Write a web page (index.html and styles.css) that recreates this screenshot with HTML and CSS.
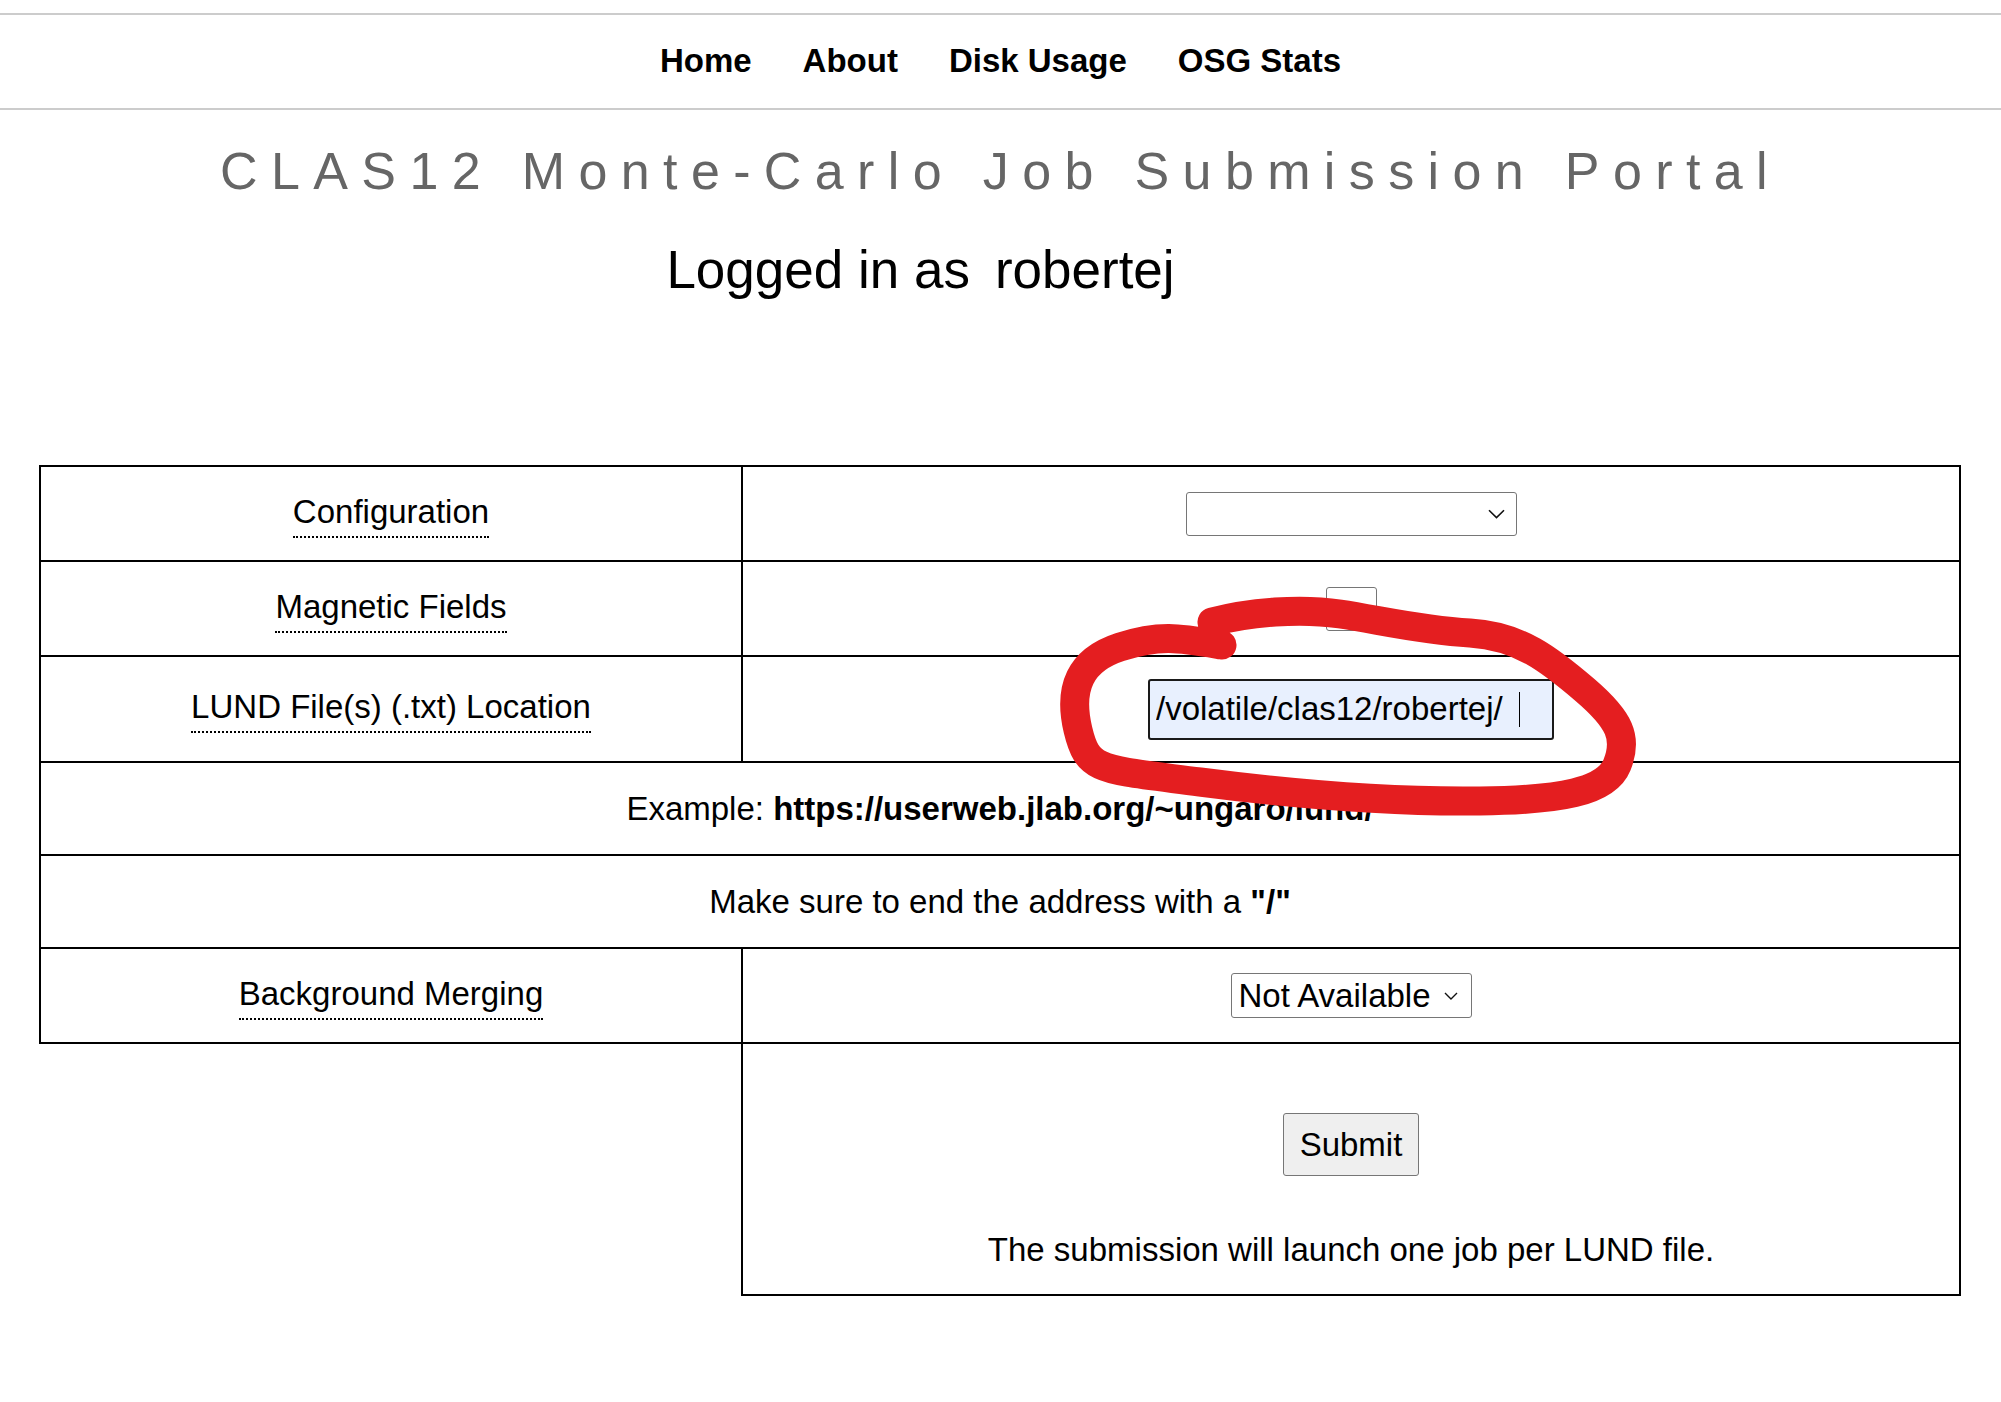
FILE: index.html
```html
<!DOCTYPE html>
<html lang="en">
<head>
<meta charset="utf-8">
<title>CLAS12 Monte-Carlo Job Submission Portal</title>
<link rel="stylesheet" href="styles.css">
</head>
<body>
<header class="topnav">
  <nav class="nav-links">
    <a href="#">Home</a>
    <a href="#">About</a>
    <a href="#">Disk Usage</a>
    <a href="#">OSG Stats</a>
  </nav>
</header>

<h1 class="portal-title">CLAS12 Monte-Carlo Job Submission Portal</h1>
<h2 class="login-line">Logged in as<span class="user">robertej</span></h2>

<form class="job-form">
  <table class="form-table">
    <colgroup>
      <col class="col-label">
      <col class="col-field">
    </colgroup>
    <tr class="row-a">
      <td class="label-cell"><span class="tip">Configuration</span></td>
      <td class="field-cell">
        <span class="select-wrap">
          <select class="sel sel-cfg"><option></option></select>
          <svg class="chev chev-cfg" width="17" height="10" viewBox="0 0 17 10"><path d="M1 1.2 L8.5 8.6 L16 1.2" fill="none" stroke="#111" stroke-width="1.6"/></svg>
        </span>
      </td>
    </tr>
    <tr class="row-a">
      <td class="label-cell"><span class="tip">Magnetic Fields</span></td>
      <td class="field-cell">
        <span class="select-wrap">
          <select class="sel sel-mag"><option></option></select>
          <svg class="chev chev-mag" width="17" height="10" viewBox="0 0 17 10"><path d="M1 1.2 L8.5 8.6 L16 1.2" fill="none" stroke="#111" stroke-width="1.6"/></svg>
        </span>
      </td>
    </tr>
    <tr class="row-b">
      <td class="label-cell"><span class="tip">LUND File(s) (.txt) Location</span></td>
      <td class="field-cell">
        <span class="input-wrap">
          <input class="loc-input" type="text" value="/volatile/clas12/robertej/">
          <span class="caret"></span>
        </span>
      </td>
    </tr>
    <tr class="row-c">
      <td class="note-cell" colspan="2">Example: <b>https://userweb.jlab.org/~ungaro/lund/</b></td>
    </tr>
    <tr class="row-c">
      <td class="note-cell" colspan="2">Make sure to end the address with a <b>"/"</b></td>
    </tr>
    <tr class="row-a">
      <td class="label-cell"><span class="tip">Background Merging</span></td>
      <td class="field-cell">
        <span class="select-wrap">
          <select class="sel sel-bg"><option>Not Available</option></select>
          <svg class="chev chev-bg" width="14" height="8" viewBox="0 0 14 8"><path d="M1 1 L7 7 L13 1" fill="none" stroke="#111" stroke-width="1.4"/></svg>
        </span>
      </td>
    </tr>
    <tr class="row-submit">
      <td class="empty-cell"></td>
      <td class="submit-cell">
        <button type="button" class="submit-btn">Submit</button>
        <p class="submit-note">The submission will launch one job per LUND file.</p>
      </td>
    </tr>
  </table>
</form>

<svg class="annotation" width="2001" height="1402" viewBox="0 0 2001 1402">
  <path d="M1212,622 C1250,612 1300,608 1340,614 S1420,630 1470,633 S1550,660 1585,690 S1628,738 1617,765 S1560,800 1480,801 S1300,795 1200,782 S1088,772 1078,730 S1080,660 1120,647 S1180,638 1222,645" fill="none" stroke="#e41e20" stroke-width="29" stroke-linecap="round" stroke-linejoin="round"/>
</svg>
</body>
</html>
```

FILE: styles.css
```css
html, body {
  margin: 0;
  padding: 0;
  background: #fff;
}

body {
  position: relative;
  font-family: "Liberation Sans", Arial, sans-serif;
  color: #000;
  min-height: 1402px;
}

.topnav {
  margin-top: 13px;
  border-top: 2px solid #cccccc;
  border-bottom: 2px solid #cccccc;
  padding: 27px 0 28px;
}

.nav-links {
  display: flex;
  justify-content: center;
  gap: 51px;
}

.nav-links a {
  font-size: 33px;
  line-height: 38px;
  font-weight: bold;
  color: #000;
  text-decoration: none;
}

.portal-title {
  margin: 31px 0 0;
  text-align: center;
  font-size: 52px;
  line-height: 60px;
  font-weight: normal;
  letter-spacing: 13.37px;
  color: #666666;
}

.login-line {
  margin: 39px 0 0;
  padding-right: 160px;
  text-align: center;
  font-size: 53px;
  line-height: 60px;
  font-weight: normal;
  color: #000;
}

.login-line .user {
  margin-left: 25px;
}

.job-form {
  margin: 165px 0 0;
}

.form-table {
  margin-left: 39px;
  width: 1920px;
  border-collapse: collapse;
  table-layout: fixed;
  font-size: 33px;
  line-height: 38px;
}

.col-label { width: 702px; }
.col-field { width: 1218px; }

.form-table td {
  border: 2px solid #000;
  padding: 0;
  text-align: center;
  vertical-align: middle;
}

.row-a { height: 95px; }
.row-b { height: 106px; }
.row-c { height: 93px; }
.row-submit { height: 252px; }

.tip {
  display: inline-block;
  padding: 3px 0 5px;
  border-bottom: 2px dotted #000;
}

.select-wrap {
  position: relative;
  display: inline-block;
  vertical-align: middle;
}

.sel {
  appearance: none;
  -webkit-appearance: none;
  display: block;
  box-sizing: border-box;
  margin: 0;
  border: 1px solid #767676;
  border-radius: 3px;
  background: #fff;
  color: #000;
  font-family: "Liberation Sans", Arial, sans-serif;
  font-size: 33px;
}

.sel-cfg { width: 331px; height: 44px; }
.sel-mag { width: 51px; height: 44px; }
.sel-bg {
  width: 241px;
  height: 45px;
  padding: 0 0 0 7px;
}

.chev {
  position: absolute;
  display: block;
}

.chev-cfg { right: 12px; top: 17px; }
.chev-mag { right: 13px; top: 17px; }
.chev-bg { right: 14px; top: 19px; }

.input-wrap {
  position: relative;
  display: inline-block;
  vertical-align: middle;
}

.loc-input {
  display: block;
  box-sizing: border-box;
  width: 406px;
  height: 61px;
  margin: 0;
  padding: 0 6px;
  border: 2px solid #1a1a1a;
  border-radius: 3px;
  background: #e8f0fe;
  color: #000;
  font-family: "Liberation Sans", Arial, sans-serif;
  font-size: 33px;
  outline: none;
}

.caret {
  position: absolute;
  left: 371px;
  top: 13px;
  width: 1px;
  height: 35px;
  background: #000;
}

.note-cell b {
  font-weight: bold;
}

.form-table td.empty-cell {
  border: none;
}

.form-table td.submit-cell {
  vertical-align: top;
  padding: 69px 0 0;
}

.submit-btn {
  display: inline-block;
  box-sizing: border-box;
  height: 63px;
  margin: 0;
  padding: 0 16px;
  border: 1px solid #767676;
  border-radius: 3px;
  background: #efefef;
  color: #000;
  font-family: "Liberation Sans", Arial, sans-serif;
  font-size: 33px;
  line-height: 38px;
}

.submit-note {
  margin: 55px 0 0;
}

.annotation {
  position: absolute;
  left: 0;
  top: 0;
  pointer-events: none;
}
```
